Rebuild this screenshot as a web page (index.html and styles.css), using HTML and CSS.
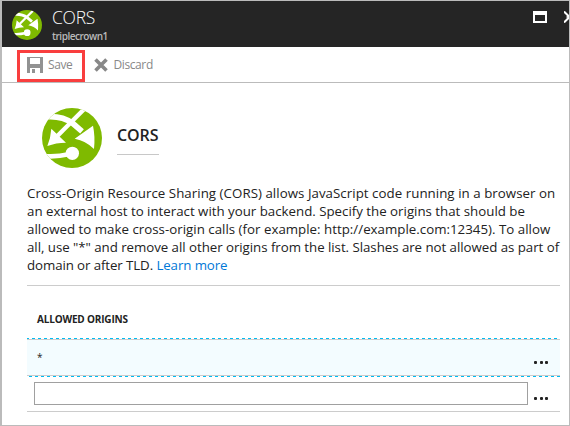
FILE: index.html
```
<!DOCTYPE html>
<html lang="en">
<head>
<meta charset="utf-8">
<title>CORS</title>
<link rel="stylesheet" href="styles.css">
</head>
<body>
<svg width="0" height="0" class="defs">
  <symbol id="cors" viewBox="0 0 180 180">
    <clipPath id="disc"><circle cx="90" cy="90" r="90"/></clipPath>
    <g clip-path="url(#disc)">
      <rect width="180" height="180" fill="#7fba00"/>
      <path d="M16 26C52 24 76 34 92 46L120 70" fill="none" stroke="#fff" stroke-width="17"/>
      <path d="M126 4L46 84" fill="none" stroke="#fff" stroke-width="13"/>
      <path d="M28 62L72 104Q42 104 16 114Q26 90 28 62Z" fill="#fff"/>
      <path d="M153 53L98 92Q132 98 156 123Q160 86 153 53Z" fill="#fff"/>
      <circle cx="91" cy="136" r="20" fill="#fff"/>
      <path d="M6 144Q40 148 84 138" fill="none" stroke="#fff" stroke-width="14"/>
    </g>
  </symbol>
</svg>
<div class="blade">
  <header class="header">
    <svg class="logo"><use href="#cors"/></svg>
    <div class="titles"><h1>CORS</h1><p>triplecrown1</p></div>
    <svg class="window" viewBox="0 0 14 12"><path d="M0 0H14V12H0ZM2 4V10H12V4Z" fill="#fff" fill-rule="evenodd"/></svg>
    <svg class="close" viewBox="0 0 5 12"><path d="M0 .5L5.500 6L0 11.500M5 5.500L4 6L5 6.500" fill="none" stroke="#fff" stroke-width="2"/></svg>
  </header>
  <div class="toolbar">
    <button class="save"><svg viewBox="0 0 16 16" width="16" height="16"><path fill="#929292" fill-rule="evenodd" d="M0 0H16V16H13V11H3V16H0ZM3 1V7H13V1ZM5 12H8V16H5Z"/></svg><span>Save</span></button>
    <button class="discard"><svg viewBox="0 0 14 14" width="14" height="14"><path d="M1.500 1.500L12.500 12.500M12.500 1.500L1.500 12.500" stroke="#888" stroke-width="3.600"/></svg><span>Discard</span></button>
  </div>
  <main>
    <div class="intro"><svg class="biglogo"><use href="#cors"/></svg><h2>CORS</h2></div>
    <p class="description"><span class="l1">Cross-Origin Resource Sharing (CORS) allows JavaScript code running in a browser on</span>
    <span class="l2">an external host to interact with your backend. Specify the origins that should be</span>
    <span class="l3">allowed to make cross-origin calls (for example: http://example.com:12345). To allow</span>
    <span class="l4">all, use "*" and remove all other origins from the list. Slashes are not allowed as part of</span>
    <span class="l5">domain or after TLD. <a>Learn more</a></span></p>
    <section class="origins">
      <h3>ALLOWED ORIGINS</h3>
      <div class="row selected"><span>*</span><i class="more"><b></b><b></b><b></b></i></div>
      <div class="row entry"><input type="text" aria-label="Origin"><i class="more"><b></b><b></b><b></b></i></div>
    </section>
  </main>
</div>
</body>
</html>
```
FILE: styles.css
```
* { box-sizing: border-box; }
body { margin: 0; font-family: "Open Sans", "Noto Sans", sans-serif; color: #222; background: #fff; }
h1, h2, h3, p { margin: 0; }
.defs { position: absolute; }
.blade { width: 570px; height: 426px; border: 1px solid #bbb; border-left-width: 2px; overflow: hidden; }
.header { height: 46px; background: #252525; display: flex; color: #fff; }
.logo { width: 30px; height: 30px; margin: 9px 0 0 10px; }
.titles { margin-left: 10px; flex: 1; white-space: nowrap; }
h1 { font-size: 17.5px; font-weight: 300; line-height: 24px; margin-top: 4px; letter-spacing: -.3px; }
.titles p { font-size: 10px; font-weight: 600; line-height: 12px; color: #bbb; letter-spacing: -.47px; margin-top: 1px; }
.window { width: 14px; height: 12px; margin: 10px 17px 0 0; }
.close { width: 5px; height: 12px; margin-top: 10px; }
.toolbar { height: 36px; border-bottom: 1px solid #bbb; display: flex; padding: 3px 0 0 15px; }
button { border: 0; background: none; padding: 0; font: 12px "Open Sans", sans-serif; color: #888; display: flex; align-items: center; }
.save { width: 68px; height: 32px; border: 3px solid #f93e3e; padding: 0 0 2px 7px; }
.save span, .discard span { margin-left: 5px; line-height: 18px; letter-spacing: -.4px; }
.discard { margin-left: 8.5px; height: 29px; }
.discard span { margin-left: 6px; }
main { padding: 25px 9px 0 25px; }
.intro { display: flex; height: 60px; padding-left: 15px; }
.biglogo { width: 60px; height: 60px; margin-right: 15px; }
h2 { font-size: 16px; font-weight: 600; width: 42px; height: 47px; line-height: 54px; border-bottom: 1px solid #c8c8c8; letter-spacing: -.1px; }
.description { margin-top: 16px; font-size: 13.3px; line-height: 18px; }
.description span { display: block; width: max-content; white-space: nowrap; }
.l1 { letter-spacing: .04px; }
.l2 { letter-spacing: -.01px; }
.l3 { letter-spacing: .01px; }
.l4 { letter-spacing: -.045px; }
.l5 { letter-spacing: -.1px; }
a { color: #0078d7; }
.origins { border-top: 1px solid #ccc; margin-top: 11px; }
h3 { font-size: 10px; font-weight: 700; line-height: 14px; height: 52px; padding: 26px 0 0 10px; letter-spacing: -.18px; }
.row { display: flex; justify-content: space-between; }
.selected { height: 39px; padding: 11px 10px 0; font-size: 10px; line-height: 17px;
  background:
    repeating-linear-gradient(90deg, #00bcf2 0 2px, transparent 2px 5px, #00bcf2 5px 6px) 0 0 / 100% 1px no-repeat,
    repeating-linear-gradient(90deg, transparent 0 2px, #00bcf2 2px 5px, transparent 5px 6px) 0 100% / 100% 1px no-repeat,
    linear-gradient(#ccc, #ccc) 0 1px / 100% 1px no-repeat,
    linear-gradient(#ccc, #ccc) 0 37px / 100% 1px no-repeat,
    linear-gradient(#f3fcff, #f3fcff) 0 2px / 100% 35px no-repeat; }
.entry { height: 35px; padding: 5px 10px 0 7px; border-bottom: 1px solid #ccc; }
input { width: 494px; height: 23px; border: 1px solid #a0a0a0; background: #fff; padding: 0 4px; }
.more { display: flex; gap: 2.5px; height: 3px; margin: 15px 2px 0 0; }
.selected .more { margin-top: 12px; }
.more b { width: 3px; height: 3px; border-radius: 1px; background: #222; }
```
